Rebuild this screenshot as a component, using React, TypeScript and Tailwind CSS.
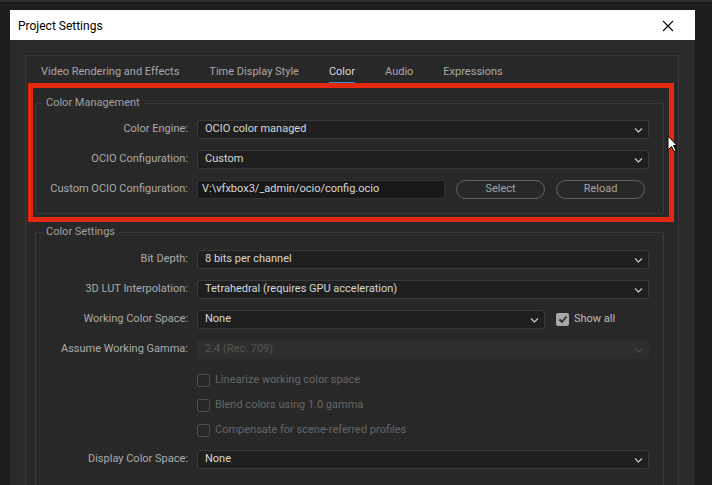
import React from "react";

const FONT = "font-['Roboto','Liberation_Sans',sans-serif]";

function Chevron({ dim = false }: { dim?: boolean }) {
  return (
    <svg width="9" height="6" viewBox="0 0 9 6" className="shrink-0 mr-[1px]">
      <path
        d="M1 1.5l3.5 3.5 3.5-3.5"
        fill="none"
        stroke={dim ? "#4a4a4a" : "#d0d0d0"}
        strokeWidth="1.1"
      />
    </svg>
  );
}

function Dropdown({
  value,
  width = "w-[452px]",
  disabled = false,
}: {
  value: string;
  width?: string;
  disabled?: boolean;
}) {
  return (
    <div
      className={`${width} h-[19px] flex items-center justify-between pl-[7px] pr-[4px] rounded-[2px] border ${
        disabled
          ? "bg-[#2e2e2e] border-[#2e2e2e] text-[#555555]"
          : "bg-[#1f1f1f] border-[#393939] text-[#d8d8d8]"
      }`}
    >
      <span>{value}</span>
      <Chevron dim={disabled} />
    </div>
  );
}

function Row({ label, children }: { label: string; children: React.ReactNode }) {
  return (
    <div className="flex items-center h-[19px]">
      <div className="w-[153px] text-right pr-[1px] whitespace-nowrap text-[#ababab]">{label}</div>
      <div className="ml-[8px] flex items-center">{children}</div>
    </div>
  );
}

function DisabledCheck({ label }: { label: string }) {
  return (
    <div className="flex items-center h-[19px] pl-[161px]">
      <div className="w-[13px] h-[13px] rounded-[2px] border-[1.5px] border-[#4d4d4d]" />
      <span className="ml-[5px] text-[#666666]">{label}</span>
    </div>
  );
}

function Group({ title, children, className = "" }: { title: string; children: React.ReactNode; className?: string }) {
  return (
    <fieldset className={`border border-[#3a3a3a] rounded-[2px] ${className}`}>
      <legend className="ml-[6px] px-[4px] text-[#a0a0a0] leading-[16px]">{title}</legend>
      {children}
    </fieldset>
  );
}

export default function App() {
  const tabs = ["Video Rendering and Effects", "Time Display Style", "Color", "Audio", "Expressions"];
  return (
    <div className={`relative w-[712px] h-[485px] overflow-hidden bg-[#1d1d1d] text-[11px] ${FONT}`}>
      <div className="h-[3px] bg-[#303030] border-b border-[#151515]" />
      <div className="pl-[10px] pt-[7px] flex">
        <div className="w-[685px] flex flex-col">
          <div className="h-[30px] bg-white flex items-center justify-between pl-[8px] pr-[21px]">
            <span className="text-[12px] text-black pt-[2px]">Project Settings</span>
            <svg width="12" height="12" viewBox="0 0 12 12" className="mt-[2px]">
              <path d="M1 1l10 10M11 1L1 11" stroke="#111" strokeWidth="1.2" />
            </svg>
          </div>
          <div className="bg-[#2a2a2a] pl-[15px] pr-[15px] pt-[15px] h-[460px] border-r border-[#232323]">
            <div className="border border-[#383838] bg-[#282828] h-[440px] pl-[9px] pr-[14px]">
              <div className="flex h-[29px] -ml-[9px] items-center pt-[3px]">
                {tabs.map((t) => (
                  <div key={t} className="px-[15px] h-full flex items-center">
                    <span
                      className={`relative ${t === "Color" ? "text-[#d8d8d8]" : "text-[#a9a9a9]"}`}
                    >
                      {t}
                      {t === "Color" && (
                        <span className="absolute left-0 right-0 -bottom-[4px] h-[2px] bg-[#2f8fe6]" />
                      )}
                    </span>
                  </div>
                ))}
              </div>

              <Group title="Color Management" className="mt-[10px] pt-[9px] pb-[14px]">
                <div className="flex flex-col gap-[11px]">
                  <Row label="Color Engine:">
                    <Dropdown value="OCIO color managed" />
                  </Row>
                  <Row label="OCIO Configuration:">
                    <Dropdown value="Custom" />
                  </Row>
                  <Row label="Custom OCIO Configuration:">
                    <div className="w-[248px] h-[19px] bg-[#181818] border border-[#333333] rounded-[2px] pl-[4px] flex items-center text-[#d8d8d8]">
                      V:\vfxbox3/_admin/ocio/config.ocio
                    </div>
                    <div className="ml-[11px] w-[89px] h-[19px] rounded-full border-[1.5px] border-[#646464] flex items-center justify-center text-[#a4a4a4]">
                      Select
                    </div>
                    <div className="ml-[11px] w-[89px] h-[19px] rounded-full border-[1.5px] border-[#646464] flex items-center justify-center text-[#a4a4a4]">
                      Reload
                    </div>
                  </Row>
                </div>
              </Group>

              <Group title="Color Settings" className="mt-[10px] pt-[10px] pb-[20px]">
                <div className="flex flex-col gap-[11px]">
                  <Row label="Bit Depth:">
                    <Dropdown value="8 bits per channel" />
                  </Row>
                  <Row label="3D LUT Interpolation:">
                    <Dropdown value="Tetrahedral (requires GPU acceleration)" />
                  </Row>
                  <Row label="Working Color Space:">
                    <Dropdown value="None" width="w-[348px]" />
                    <div className="ml-[11px] w-[13px] h-[13px] rounded-[2px] bg-[#a8a8a8] flex items-center justify-center">
                      <svg width="10" height="9" viewBox="0 0 10 9">
                        <path d="M1.5 4.5l2.5 2.5 4.5-5.5" fill="none" stroke="#2a2a2a" strokeWidth="1.8" />
                      </svg>
                    </div>
                    <span className="ml-[5px] text-[#bdbdbd]">Show all</span>
                  </Row>
                  <Row label="Assume Working Gamma:">
                    <Dropdown value="2.4 (Rec. 709)" disabled />
                  </Row>
                </div>
                <div className="mt-[12px] flex flex-col gap-[6px]">
                  <DisabledCheck label="Linearize working color space" />
                  <DisabledCheck label="Blend colors using 1.0 gamma" />
                  <DisabledCheck label="Compensate for scene-referred profiles" />
                </div>
                <div className="mt-[10px]">
                  <Row label="Display Color Space:">
                    <Dropdown value="None" />
                  </Row>
                </div>
              </Group>
            </div>
          </div>
        </div>
      </div>

      {/* annotation box */}
      <div className="absolute left-[28px] top-[83px] w-[646px] h-[139px] border-[5px] border-[#e4280e] pointer-events-none" />

      {/* mouse cursor */}
      <svg className="absolute left-[667px] top-[135px]" width="10" height="17" viewBox="0 0 10 17">
        <path d="M1 1v14l3.5-3.5 2.5 5 2-1-2.5-5H10z" fill="#fff" stroke="#000" strokeWidth="1" />
      </svg>
    </div>
  );
}
